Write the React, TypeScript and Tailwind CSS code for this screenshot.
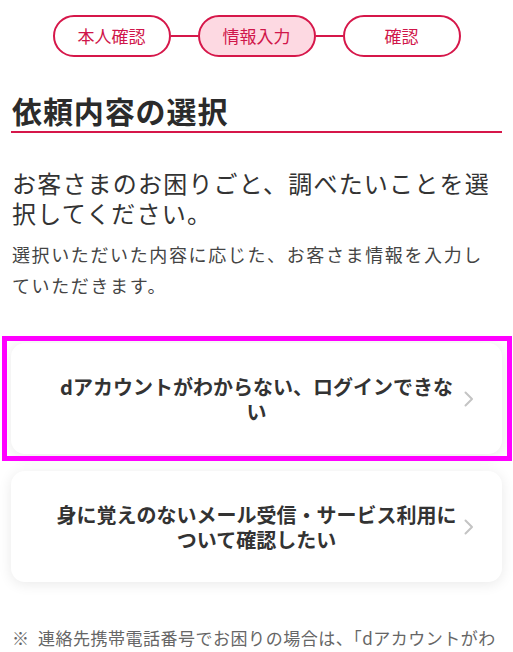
import React from "react";

const Chevron = () => (
  <svg width="12" height="16" viewBox="0 0 12 16" fill="none" className="absolute right-[27px] top-1/2 -translate-y-1/2">
    <path d="M2.5 1.5 L9 8 L2.5 14.5" stroke="#c4c4c4" strokeWidth="2" strokeLinecap="round" strokeLinejoin="round" />
  </svg>
);

const Step = ({ label, active }: { label: string; active?: boolean }) => (
  <div
    className={`w-[118px] h-[42px] rounded-full border-2 border-[#d6174a] flex items-center justify-center text-[17px] text-[#d0164a] ${active ? "bg-[#fdd9e2]" : "bg-white"}`}
  >
    {label}
  </div>
);

export default function App() {
  return (
    <div
      className="w-[513px] h-[652px] overflow-hidden bg-white text-[#333]"
      style={{ fontFamily: '"Noto Sans CJK JP", "Noto Sans", sans-serif' }}
    >
      <div className="px-[11px] pt-[15px]">
        <div className="flex items-center justify-center">
          <Step label="本人確認" />
          <div className="w-[27px] h-[1.5px] bg-[#d6174a]" />
          <Step label="情報入力" active />
          <div className="w-[27px] h-[1.5px] bg-[#d6174a]" />
          <Step label="確認" />
        </div>

        <h1 className="mt-[35px] pl-[1px] pb-[3px] border-b-2 border-[#d6174a] text-[30px] leading-[36px] font-bold tracking-[0.03em] text-[#2b2b2b]">
          依頼内容の選択
        </h1>

        <p className="mt-[35px] pl-[1px] text-[24px] leading-[30px] tracking-[0.05em] text-[#333]">
          お客さまのお困りごと、調べたいことを選
          <br />
          択してください。
        </p>

        <p className="mt-[11px] pl-[1px] text-[18px] leading-[31px] tracking-[0.09em] text-[#444]">
          選択いただいた内容に応じた、お客さま情報を入力し
          <br />
          ていただきます。
        </p>

        <div className="relative mt-[42px]">
          <div className="relative h-[111px] rounded-[14px] bg-white shadow-[0_2px_14px_rgba(0,0,0,0.09)] flex items-center justify-center px-[36px]">
            <p className="text-center whitespace-nowrap text-[20px] leading-[25px] font-bold text-[#333]">
              dアカウントがわからない、ログインできな
              <br />
              い
            </p>
            <Chevron />
          </div>
          <div className="absolute -top-[7px] -left-[9px] -right-[10px] -bottom-[7px] border-[5px] border-[#ff00ff] pointer-events-none" />
        </div>

        <div className="relative mt-[17px] h-[111px] rounded-[14px] bg-white shadow-[0_2px_14px_rgba(0,0,0,0.09)] flex items-center justify-center px-[36px]">
          <p className="text-center whitespace-nowrap text-[20px] leading-[25px] font-bold text-[#333]">
            身に覚えのないメール受信・サービス利用に
            <br />
            ついて確認したい
          </p>
          <Chevron />
        </div>

        <div className="mt-[42px] pl-[1px] flex text-[17px] leading-[28px] tracking-[0.03em] text-[#666]">
          <span className="w-[26px] shrink-0">※</span>
          <span>連絡先携帯電話番号でお困りの場合は、「dアカウントがわからない、ログインできない」を選択してください。</span>
        </div>
      </div>
    </div>
  );
}
